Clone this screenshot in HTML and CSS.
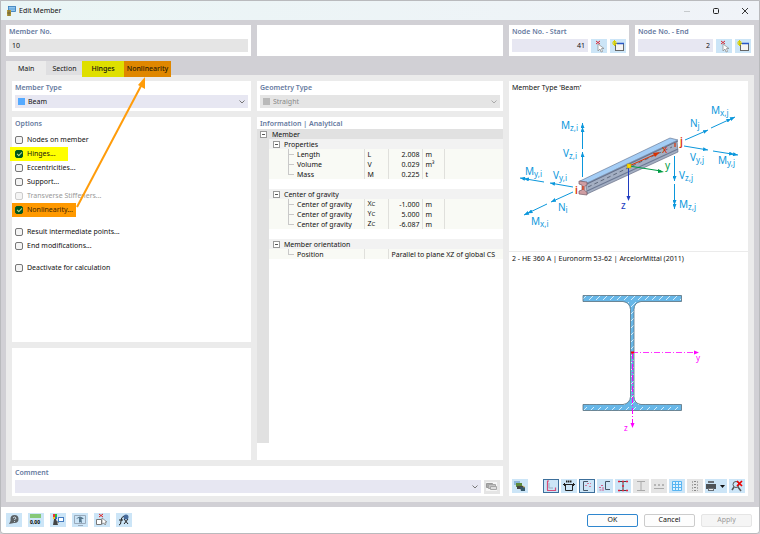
FILE: index.html
```html
<!DOCTYPE html>
<html lang="en">
<head>
    <meta charset="UTF-8">
    <meta name="viewport" content="width=device-width, initial-scale=1.0">
    <title>Edit Member</title>
    <link rel="stylesheet" href="styles.css">
</head>
<body>
    <div class="dialog">
        <header class="titlebar">
            <svg class="app-icon" viewBox="0 0 10 10"><rect x="2.5" y="0.5" width="7" height="5" fill="#8fc6f0" stroke="#2f78b8" stroke-width=".8"/><path d="M2.5 3H9.5" stroke="#2f78b8" stroke-width=".5"/><rect x="1" y="4" width="4" height="6" fill="#b39b3c"/><path d="M1 7h4M3 4v6" stroke="#5c5430" stroke-width=".7"/></svg>
            <h1>Edit Member</h1>
            <div class="window-buttons">
                <button aria-label="Minimize"><svg viewBox="0 0 8 8"><path d="M1 4.5h6" stroke="#c6cacd" fill="none"/></svg></button>
                <button aria-label="Maximize"><svg viewBox="0 0 8 8"><rect x="1.5" y="1.5" width="5" height="5" rx="1" fill="none" stroke="#222"/></svg></button>
                <button aria-label="Close"><svg viewBox="0 0 8 8"><path d="M1 1l6 6M7 1L1 7" stroke="#222" stroke-width=".9"/></svg></button>
            </div>
        </header>

        <main class="content">
            <div class="head-row">
                <section class="panel">
                    <label class="heading" for="memberNo">Member No.</label>
                    <input class="field readonly" id="memberNo" type="text" value="10" readonly>
                </section>
                <section class="panel"></section>
                <section class="panel">
                    <label class="heading" for="nodeStart">Node No. - Start</label>
                    <div class="node-row">
                        <input class="field number" id="nodeStart" type="text" value="41">
                        <button class="tool" aria-label="Select start node"><svg viewBox="0 0 16 14"><use href="#pick"/></svg></button>
                        <button class="tool" aria-label="New start node"><svg viewBox="0 0 16 14"><use href="#new"/></svg></button>
                    </div>
                </section>
                <section class="panel">
                    <label class="heading" for="nodeEnd">Node No. - End</label>
                    <div class="node-row">
                        <input class="field number" id="nodeEnd" type="text" value="2">
                        <button class="tool" aria-label="Select end node"><svg viewBox="0 0 16 14"><use href="#pick"/></svg></button>
                        <button class="tool" aria-label="New end node"><svg viewBox="0 0 16 14"><use href="#new"/></svg></button>
                    </div>
                </section>
            </div>

            <nav class="tabs">
                <button class="tab active">Main</button>
                <button class="tab">Section</button>
                <button class="tab yellow">Hinges</button>
                <button class="tab orange">Nonlinearity</button>
            </nav>

            <div class="page">
                <section class="panel type">
                    <label class="heading" for="memberType">Member Type</label>
                    <div class="select-box">
                        <span class="swatch"></span>
                        <select id="memberType"><option>Beam</option></select>
                        <svg class="chevron" viewBox="0 0 6 4"><path d="M.5.5L3 3 5.5.5" fill="none" stroke="#777"/></svg>
                    </div>
                </section>
                <section class="panel geometry">
                    <label class="heading" for="geometryType">Geometry Type</label>
                    <div class="select-box disabled">
                        <span class="swatch"></span>
                        <select id="geometryType" disabled><option>Straight</option></select>
                        <svg class="chevron" viewBox="0 0 6 4"><path d="M.5.5L3 3 5.5.5" fill="none" stroke="#aaa"/></svg>
                    </div>
                </section>

                <section class="panel options">
                    <h2 class="heading">Options</h2>
                    <div class="checks">
                        <label><input type="checkbox">Nodes on member</label>
                        <label class="mark-yellow"><input type="checkbox" checked>Hinges...</label>
                        <label><input type="checkbox">Eccentricities...</label>
                        <label><input type="checkbox">Support...</label>
                        <label class="off"><input type="checkbox" disabled>Transverse Stiffeners...</label>
                        <label class="mark-orange"><input type="checkbox" checked>Nonlinearity...</label>
                    </div>
                    <div class="checks">
                        <label><input type="checkbox">Result intermediate points...</label>
                        <label><input type="checkbox">End modifications...</label>
                    </div>
                    <div class="checks">
                        <label><input type="checkbox">Deactivate for calculation</label>
                    </div>
                </section>
                <section class="panel blank"></section>

                <section class="panel info">
                    <h2 class="heading">Information | Analytical</h2>
                    <div class="tree">
                        <table>
                            <colgroup><col class="c-gutter"><col class="c-name"><col class="c-sym"><col class="c-val"><col class="c-unit"><col></colgroup>
                            <tr class="root"><td><i class="box"></i></td><th colspan="5">Member</th></tr>
                            <tr class="group"><td></td><th colspan="5"><i class="box"></i>Properties</th></tr>
                            <tr><td></td><td>Length</td><td>L</td><td>2.008</td><td>m</td><td></td></tr>
                            <tr><td></td><td>Volume</td><td>V</td><td>0.029</td><td>m³</td><td></td></tr>
                            <tr class="last"><td></td><td>Mass</td><td>M</td><td>0.225</td><td>t</td><td></td></tr>
                            <tr class="space"><td></td><td colspan="5"></td></tr>
                            <tr class="group"><td></td><th colspan="5"><i class="box"></i>Center of gravity</th></tr>
                            <tr><td></td><td>Center of gravity</td><td>X<small>C</small></td><td>-1.000</td><td>m</td><td></td></tr>
                            <tr><td></td><td>Center of gravity</td><td>Y<small>C</small></td><td>5.000</td><td>m</td><td></td></tr>
                            <tr class="last"><td></td><td>Center of gravity</td><td>Z<small>C</small></td><td>-6.087</td><td>m</td><td></td></tr>
                            <tr class="space"><td></td><td colspan="5"></td></tr>
                            <tr class="group"><td></td><th colspan="5"><i class="box"></i>Member orientation</th></tr>
                            <tr class="last"><td></td><td>Position</td><td></td><td class="wide" colspan="3">Parallel to plane XZ of global CS</td></tr>
                        </table>
                        <div class="gutter"></div>
                    </div>
                </section>

                <section class="panel comment">
                    <label class="heading" for="comment">Comment</label>
                    <div class="comment-row">
                        <div class="select-box">
                            <select id="comment"><option></option></select>
                            <svg class="chevron" viewBox="0 0 6 4"><path d="M.5.5L3 3 5.5.5" fill="none" stroke="#777"/></svg>
                        </div>
                        <button class="tool grey" aria-label="Edit comments"><svg viewBox="0 0 16 14"><path d="M2 2h11v9H2z" fill="#f6f6f6"/><path d="M2.5 3.5h6v4h-6z" fill="#aaa" stroke="#999"/><path d="M4.500 4.500h7v4h-7z" fill="#c4c4c4" stroke="#a5a5a5"/><path d="M6.500 6.500h6v3h-6z" fill="#ddd" stroke="#a5a5a5"/></svg></button>
                    </div>
                </section>

                <section class="panel preview">
                    <div class="view beam-view">
                        <p>Member Type 'Beam'</p>
                        <svg class="beam" viewBox="509 95 239 150">
                            <defs>
                                <marker id="a1" viewBox="0 0 5 4" refX="5" refY="2" markerWidth="5" markerHeight="4" markerUnits="userSpaceOnUse" orient="auto"><path d="M0 0l5 2-5 2z" fill="#0b97dc"/></marker>
                                <marker id="a2" viewBox="0 0 9 4" refX="9" refY="2" markerWidth="9" markerHeight="4" markerUnits="userSpaceOnUse" orient="auto"><path d="M0 0l5 2-5 2zM4 0l5 2-5 2z" fill="#0b97dc"/></marker>
                            </defs>
                            <path d="M586 184L677 141l1 11-91 42z" fill="#a3aec2" stroke="#596078" stroke-width=".6"/>
                            <path d="M580 181L670 138l8 2-91 43z" fill="#a4cdf5" stroke="#596a88" stroke-width=".6"/>
                            <path d="M587 184L678 141" stroke="#65738e"/>
                            <path d="M587 191L678 149" stroke="#6b7893" stroke-width="1.2"/>
                            <path d="M588 187L672 147" stroke="#424c60" stroke-width=".7" stroke-dasharray="4 3"/>
                            <path d="M579 181l8 1v3l-2 1v5l2 1v3l-8-1v-3l3-1v-5l-3-1z" fill="#cf9da2" stroke="#725a67" stroke-width=".7"/>
                            <path d="M675 143v4M583 186v4" stroke="#d93000" stroke-width="1.2"/>
                            <g stroke="#0b97dc" stroke-width="1" fill="none">
                                <path d="M582.500 149V123" marker-end="url(#a2)"/>
                                <path d="M582.500 177V152" marker-end="url(#a1)"/>
                                <path d="M573 187L550 183" marker-end="url(#a1)"/>
                                <path d="M544 182L520 178" marker-end="url(#a2)"/>
                                <path d="M573 192L551 202" marker-end="url(#a1)"/>
                                <path d="M547 204L524 215" marker-end="url(#a2)"/>
                                <path d="M685 140L708 130" marker-end="url(#a1)"/>
                                <path d="M711 128L735 117" marker-end="url(#a2)"/>
                                <path d="M684 146L708 150" marker-end="url(#a1)"/>
                                <path d="M713 151L738 155" marker-end="url(#a2)"/>
                                <path d="M674.500 156V181" marker-end="url(#a1)"/>
                                <path d="M674.500 184V209" marker-end="url(#a2)"/>
                            </g>
                            <g class="force">
                                <text x="561" y="129">M<tspan class="sub" dy="2">z,i</tspan></text>
                                <text x="563" y="157">V<tspan class="sub" dy="2">z,i</tspan></text>
                                <text x="525" y="175">M<tspan class="sub" dy="2">y,i</tspan></text>
                                <text x="553" y="179">V<tspan class="sub" dy="2">y,i</tspan></text>
                                <text x="558" y="211">N<tspan class="sub" dy="2">i</tspan></text>
                                <text x="531" y="225">M<tspan class="sub" dy="2">x,i</tspan></text>
                                <text x="690" y="127">N<tspan class="sub" dy="2">j</tspan></text>
                                <text x="711" y="114">M<tspan class="sub" dy="2">x,j</tspan></text>
                                <text x="690" y="161">V<tspan class="sub" dy="2">y,j</tspan></text>
                                <text x="718" y="164">M<tspan class="sub" dy="2">y,j</tspan></text>
                                <text x="679" y="179">V<tspan class="sub" dy="2">z,j</tspan></text>
                                <text x="679" y="208">M<tspan class="sub" dy="2">z,j</tspan></text>
                            </g>
                            <g class="axis">
                                <path d="M629 166L656 154" stroke="#d93000"/><path d="M660 152l-7 1 2 4z" fill="#d93000"/>
                                <path d="M629 166L661 171" stroke="#009c45"/><path d="M664 172l-6-3v4z" fill="#009c45"/>
                                <path d="M628.500 166V197" stroke="#203cc0"/><path d="M628.500 201l-2-5h4z" fill="#203cc0"/>
                                <rect x="627" y="164" width="4" height="4" fill="#ffda00" stroke="#ad9600" stroke-width=".5"/>
                                <text x="662" y="153" fill="#d93000">x</text>
                                <text x="665" y="169" fill="#009c45">y</text>
                                <text x="621" y="209" fill="#203cc0">z</text>
                                <text class="end" x="575" y="194" fill="#d93000">i</text>
                                <text class="end" x="680" y="145" fill="#d93000">j</text>
                            </g>
                        </svg>
                    </div>
                    <div class="view section-view">
                        <p>2 - HE 360 A | Euronorm 53-62 | ArcelorMittal (2011)</p>
                        <svg class="profile" viewBox="509 266 239 180">
                            <defs><pattern id="hatch" width="7" height="7" patternUnits="userSpaceOnUse"><rect width="7" height="7" fill="#67b7e8"/><path d="M1 6L6 1" stroke="#d5eefc" stroke-width="1"/></pattern></defs>
                            <path d="M583 295.500h98.500v6H641q-7 1-7 8v87q0 7 7 8h40.500v6H583v-6h40q7-1 7.500-8v-87q-.5-7-7.500-8h-40z" fill="url(#hatch)" stroke="#58707e" stroke-width=".8"/>
                            <path d="M632 352.500H694" stroke="#f0f" stroke-width=".8" stroke-dasharray="6 2 1 2"/>
                            <path d="M632.500 353V425" stroke="#f0f" stroke-dasharray="6 2 1 2"/>
                            <path d="M699 352.500l-5-2v4zM632.500 428l-2-5h4z" fill="#f0f"/>
                            <rect x="631" y="351.500" width="3" height="2" fill="red"/>
                            <text x="696" y="361" class="pink">y</text>
                            <text x="624" y="431" class="pink">z</text>
                        </svg>
                        <div class="toolbar">
                            <button class="tool" aria-label="Export"><svg viewBox="0 0 16 14"><path d="M2 2h6v4H2z" fill="#8fb7dc"/><path d="M4 4h6v4H4z" fill="#5d8a3a"/><path d="M5 7h6v3H5z" fill="#444"/><path d="M8 8h5v4H9z" fill="#36586a"/><path d="M10 6l3 2-1 1z" fill="#b89a4c"/></svg></button>
                            <span class="grow"></span>
                            <button class="tool pressed" aria-label="Show axes"><svg viewBox="0 0 16 14"><path d="M4 2h2M4.500 2v9M4 11.500h8.500v-3" fill="none" stroke="#d64c78" stroke-width="1.2"/><path d="M6 4v5h4" fill="none" stroke="#99aec4"/></svg></button>
                            <button class="tool" aria-label="Dimensions"><svg viewBox="0 0 16 14"><path d="M2 5.500h12M3.500 4v3M12.500 4v3M4.500 6v5.500h7V6" fill="none" stroke="#222"/><path d="M5 2.500h6" stroke="#222" stroke-width="2" stroke-dasharray="1.500 .5"/></svg></button>
                            <button class="tool pressed" aria-label="Stress points"><svg viewBox="0 0 16 14"><path d="M9 2.500H4.500v9H9" fill="none" stroke="#456"/><path d="M6 6.500h3M8 4.500h4M10 7.500h2" stroke="#d37c9c" stroke-dasharray="2 1"/></svg></button>
                            <button class="tool" aria-label="Part labels"><svg viewBox="0 0 16 14"><path d="M13 2.500H8.500v8H13" fill="none" stroke="#456"/><path d="M4 6.500h2M2 8.500h2M2.500 11h2M6 8v4" stroke="#d35c8c"/></svg></button>
                            <button class="tool" aria-label="Section outline"><svg viewBox="0 0 16 14"><path d="M3 2.500h10M3 11.500h10M8 3v8" stroke="#444"/><path d="M3 2.500h2M7 2.500h2M11 2.500h2M3 11.500h2M7 11.500h2M11 11.500h2M8 6v2" stroke="#e0203c" stroke-width="1.500"/></svg></button>
                            <button class="tool grey" aria-label="Section parts"><svg viewBox="0 0 16 14"><path d="M4 2.500h8M4 11.500h8M8 3v8" stroke="#aaa"/></svg></button>
                            <button class="tool grey" aria-label="Distances"><svg viewBox="0 0 16 14"><path d="M3 9.500h10" stroke="#aaa"/><path d="M3 6h10" stroke="#b5b5b5" stroke-width="2" stroke-dasharray="2 2"/></svg></button>
                            <button class="tool" aria-label="Grid"><svg viewBox="0 0 16 14"><path d="M3.500 2.500h9v9h-9zM3.500 5.500h9M3.500 8.500h9M6.500 3v9M9.500 3v9" fill="#e0f2ff" stroke="#59b5f2"/></svg></button>
                            <button class="tool grey" aria-label="Values"><svg viewBox="0 0 16 14"><path d="M5.500 2v10M10.500 2v10" stroke="#aaa" stroke-dasharray="2 1"/><path d="M8 2v10" stroke="#888" stroke-width="2" stroke-dasharray="1 2"/></svg></button>
                            <button class="tool print" aria-label="Print"><svg viewBox="0 0 22 14"><path d="M1 5h10v5H1z" fill="#4d5358"/><path d="M3 2h6v2H3zM3 9h6v3H3z" fill="#697077"/><path d="M4 10.500h4" stroke="#eee"/><path d="M15 6h5l-2.500 3z" fill="#111"/></svg></button>
                            <button class="tool" aria-label="Reset zoom"><svg viewBox="0 0 16 14"><circle cx="7" cy="5.500" r="3" fill="none" stroke="#555"/><path d="M5 8l-2 3M9 8l3 4" stroke="#555" stroke-width="1.500"/><path d="M8 2l5 5M13 2L8 7" stroke="#e00" stroke-width="1.700"/></svg></button>
                        </div>
                    </div>
                </section>
            </div>
        </main>

        <footer class="footer">
            <button class="tool" aria-label="Help"><svg viewBox="0 0 16 14"><circle cx="8.500" cy="6" r="4" fill="#5c6266"/><path d="M5 7l-2 4 5-1z" fill="#5c6266"/><path d="M7 5q1.500-2 3 0 0 1-1.500 1.500V7M8.500 8v1" fill="none" stroke="#d6e6f0" stroke-width=".9"/></svg></button>
            <button class="tool" aria-label="Units"><svg viewBox="0 0 16 14"><path d="M2 1h11v4H2z" fill="#85c878"/><text x="2" y="11" class="units">0,00</text></svg></button>
            <button class="tool" aria-label="Colors"><svg viewBox="0 0 16 14"><path d="M3 1h2v3H3z" fill="#e33"/><path d="M5 1h2v3H5z" fill="#3b3"/><path d="M3 4h2v2H3z" fill="#ec2"/><path d="M5 4h2v2H5z" fill="#36c"/><path d="M4 6h2l2 6H3z" fill="#444"/><path d="M6 9h3" stroke="#444"/><rect x="8.500" y="4.500" width="5" height="4" fill="#fff" stroke="#447bc0"/></svg></button>
            <button class="tool" aria-label="View"><svg viewBox="0 0 16 14"><path d="M2.500 2.500h11v8h-11zM6 12.500h5" fill="none" stroke="#9ab"/><path d="M4 6q4-5 8 0H9.500l.5 4-2-1-1 1V5z" fill="#58788e"/></svg></button>
            <button class="tool" aria-label="Pick from model"><svg viewBox="0 0 16 14"><path d="M5 1l4 3M9 1L5 4" stroke="#d22"/><path d="M2.500 6.500h5v5h-5z" fill="#fff" stroke="#777"/><path d="M8 5v6l2-1 1 2 1-1-1-2h2z" fill="#fff" stroke="#777" stroke-width=".7"/></svg></button>
            <button class="tool" aria-label="Script"><svg viewBox="0 0 16 14"><path d="M3 12q2 0 2-4 0-4 3-5M3 7h4M8 6l4 5M12 6l-4 5" fill="none" stroke="#222"/><circle cx="10" cy="4" r="2.500" fill="#476b9c"/></svg></button>
            <span class="grow"></span>
            <button class="action primary">OK</button>
            <button class="action">Cancel</button>
            <button class="action" disabled>Apply</button>
        </footer>

        <svg class="pointer" viewBox="0 0 102 136"><path d="M2 131L67 8" stroke="#ff9c0a" stroke-width="2"/><path d="M70 1l-7 8 7 4z" fill="#ff9c0a"/></svg>
    </div>

    <svg class="sprite">
        <g id="pick"><path d="M5 2l4 3M9 2L5 5" stroke="#d62a35"/><path d="M7 5v7l2-2 1 3 1.500-.5-1-3H13z" fill="#fff" stroke="#888" stroke-width=".7"/></g>
        <g id="new"><rect x="5.500" y="4.500" width="8" height="7" fill="#f4f4f4" stroke="#666"/><path d="M7 4.500h7" stroke="#2858c8" stroke-width="1.500"/><path d="M4.500 1v6M2 4h5M3 2l3 4M6 2L3 6" stroke="#d8d000"/></g>
    </svg>
</body>
</html>
```
FILE: styles.css
```css
* {
    box-sizing: border-box;
}

body {
    margin: 0;
    font-family: "Noto Sans", "Open Sans", sans-serif;
    font-size: 7px;
    line-height: 10px;
    color: #111;
    background: #d1d0d5;
}

button, input, select {
    font: inherit;
    color: inherit;
    border: 0;
    margin: 0;
    padding: 0;
    border-radius: 0;
}

h1, h2, p {
    margin: 0;
    font-size: 7px;
    font-weight: normal;
}

svg {
    display: block;
}

.sprite {
    position: absolute;
    width: 0;
    height: 0;
}

.dialog {
    position: relative;
    display: flex;
    flex-direction: column;
    min-height: 100vh;
    border: 1px solid #b9babd;
    border-radius: 0 0 4px 4px;
    overflow: hidden;
}

.titlebar {
    display: flex;
    align-items: center;
    gap: 3px;
    height: 19px;
    padding: 0 10px 0 5px;
    background: linear-gradient(90deg, #eaf5f5, #f0f3f8);
}

.app-icon {
    width: 10px;
    height: 10px;
}

.window-buttons {
    display: flex;
    gap: 21px;
    margin-left: auto;
}

.window-buttons button {
    width: 8px;
    height: 8px;
    background: none;
}

.content {
    flex: 1;
    display: flex;
    flex-direction: column;
    padding: 5px;
}

.panel {
    background: #fff;
    padding: 2px 3px 3px;
    min-width: 0;
}

.heading {
    display: block;
    height: 12px;
    line-height: 9px;
    font-weight: 600;
    color: #667aa0;
}

.head-row {
    display: grid;
    grid-template-columns: 245fr 246fr 120fr 119fr;
    gap: 6px;
    height: 30px;
}

.field {
    display: block;
    width: 100%;
    min-width: 0;
    height: 13px;
    padding: 0 3px;
    background: #e7e7f2;
}

.field.readonly {
    background: #e5e5e5;
}

.number {
    text-align: right;
}

.node-row {
    display: flex;
    gap: 3px;
}

.tool {
    flex: none;
    width: 16px;
    height: 14px;
    background: #cce5f7;
}

.tool svg {
    width: 100%;
    height: 100%;
}

.tool.grey {
    background: #e5e5e5;
}

.tool.pressed {
    outline: 1px solid #3c6f9b;
    outline-offset: -1px;
}

.tabs {
    display: flex;
    height: 14px;
    margin-top: 6px;
}

.tab {
    height: 16px;
    padding: 0 6px;
    background: #dfdfe1;
}

.tab.active {
    background: #ebebeb;
    padding: 0 12px;
}

.tab.yellow {
    background: #dfdf00;
    padding: 0 9px;
    font-weight: 500;
    z-index: 1;
}

.tab.orange {
    background: #df8700;
    color: #2c1a00;
    padding: 0 3px;
    font-weight: 500;
    z-index: 1;
}

.page {
    flex: 1;
    display: grid;
    grid-template-columns: 239fr 246fr 239fr;
    grid-template-rows: 30px 2fr 1fr 30px;
    grid-template-areas:
        "type geometry preview"
        "options info preview"
        "blank info preview"
        "comment comment preview";
    gap: 6px;
    padding: 6px;
    background: #ebebeb;
}

.type { grid-area: type; }
.geometry { grid-area: geometry; }
.options { grid-area: options; }
.blank { grid-area: blank; }
.info { grid-area: info; }
.comment { grid-area: comment; }
.preview { grid-area: preview; }

.select-box {
    flex: 1;
    display: flex;
    align-items: center;
    gap: 3px;
    height: 13px;
    padding: 0 3px;
    background: #e7e7f2;
}

.select-box select {
    flex: 1;
    appearance: none;
    background: none;
    opacity: 1;
}

.select-box.disabled {
    background: #e5e5e5;
    color: #888;
}

.swatch {
    width: 7px;
    height: 7px;
    background: #55aaff;
}

.disabled .swatch {
    background: #b9b9b9;
}

.chevron {
    width: 6px;
    height: 4px;
}

.checks {
    display: flex;
    flex-direction: column;
    align-items: flex-start;
    margin: 2px -3px 8px;
}

.checks + .checks {
    margin-top: 0;
}

.checks label {
    display: flex;
    align-items: center;
    gap: 4px;
    height: 14px;
    padding: 0 3px;
}

.checks input {
    appearance: none;
    width: 8px;
    height: 8px;
    border: 1px solid #777;
    border-radius: 2px;
    background: #f4f4f4;
}

.checks input:checked {
    border-color: #005a20;
    background: #00551e;
}

.checks input:checked::after {
    content: "";
    display: block;
    width: 4px;
    height: 2px;
    margin: 1px;
    border-left: 1px solid #b8d890;
    border-bottom: 1px solid #b8d890;
    transform: rotate(-45deg);
}

.checks .off {
    color: #999;
}

.checks .off input {
    border-color: #ccc;
}

.checks .mark-yellow {
    margin-left: -2px;
    padding: 0 12px 0 5px;
    background: #ffff00;
}

.checks .mark-orange {
    background: #ff9900;
    color: #3a2200;
}

.info {
    display: flex;
    flex-direction: column;
    padding: 2px 0 17px;
}

.info .heading {
    padding-left: 3px;
    height: 10px;
}

.tree {
    flex: 1;
    display: flex;
    flex-direction: column;
}

.tree table {
    width: 100%;
    table-layout: fixed;
    border-collapse: collapse;
    line-height: 9px;
}

.gutter {
    flex: 1;
    width: 12px;
    background: #e1e1e1;
}

.c-gutter { width: 12px; }
.c-name { width: 95px; }
.c-sym { width: 24px; }
.c-val { width: 34px; }
.c-unit { width: 22px; }

.tree tr {
    height: 10px;
}

.tree td, .tree th {
    padding: 0 3px;
    text-align: left;
    font-weight: normal;
    white-space: nowrap;
    background: #f9faf5;
    border-right: 1px solid #e0e0dc;
}

.tree td:last-child, .tree th {
    border-right: 0;
}

.tree tr td:first-child {
    background: #e1e1e1;
    border: 0;
}

.tree td:nth-child(2) {
    padding-left: 28px;
    background: linear-gradient(#c9c9c9, #c9c9c9) 19px 5px / 6px 1px no-repeat, linear-gradient(90deg, transparent 19px, #c9c9c9 19px, #c9c9c9 20px, transparent 20px), #f9faf5;
}

.tree .last td:nth-child(2) {
    background: linear-gradient(#c9c9c9, #c9c9c9) 19px 5px / 6px 1px no-repeat, linear-gradient(#c9c9c9, #c9c9c9) 19px 0 / 1px 5px no-repeat, #f9faf5;
}

.tree td:nth-child(4) {
    text-align: right;
    padding-right: 2px;
}

.tree td.wide {
    text-align: left;
}

.tree .space td:nth-child(2) {
    background: #fff;
}

.tree .group th {
    background: #f2f2f2;
    padding-left: 4px;
}

.tree .root th {
    background: #e1e1e1;
}

.box {
    display: inline-block;
    width: 7px;
    height: 7px;
    margin-right: 4px;
    border: 1px solid #999;
    vertical-align: -1px;
    background: linear-gradient(#555, #555) 1px 2px / 3px 1px no-repeat, #fff;
}

.root .box {
    margin: 0;
}

.tree small {
    font-size: 6px;
}

.comment-row {
    display: flex;
    gap: 3px;
}

.preview {
    display: flex;
    flex-direction: column;
    padding: 0;
}

.view p {
    height: 14px;
    padding: 2px 3px 0;
}

.beam-view {
    flex: 171;
    border-bottom: 1px solid #ebebeb;
}

.section-view {
    flex: 245;
    display: flex;
    flex-direction: column;
}

.beam, .profile {
    width: 100%;
}

.force {
    font-size: 10px;
    fill: #0b97dc;
}

.sub {
    font-size: 8px;
}

.axis {
    font-size: 10px;
}

.end {
    font-weight: 600;
}

.pink {
    font-size: 8px;
    fill: #f0f;
}

.toolbar {
    display: flex;
    gap: 2px;
    margin-top: auto;
    padding: 0 3px 3px;
}

.tool.print {
    width: 22px;
}

.grow {
    flex: 1;
}

.footer {
    display: flex;
    align-items: center;
    gap: 6px;
    height: 26px;
    padding: 0 7px 0 5px;
    background: #fff;
}

.units {
    font-size: 5px;
    font-weight: bold;
}

.action {
    width: 51px;
    height: 13px;
    border: 1px solid #ccc;
    border-radius: 2px;
    background: #fdfdfd;
}

.action.primary {
    border-color: #2e86ce;
}

.action:disabled {
    color: #999;
    border-color: #e5e5e5;
    background: #f5f5f5;
}

/* arrow from the option to its tab, drawn over both */
.pointer {
    position: absolute;
    left: 74px;
    top: 75px;
    width: 102px;
    height: 136px;
    pointer-events: none;
    z-index: 2;
}
```
